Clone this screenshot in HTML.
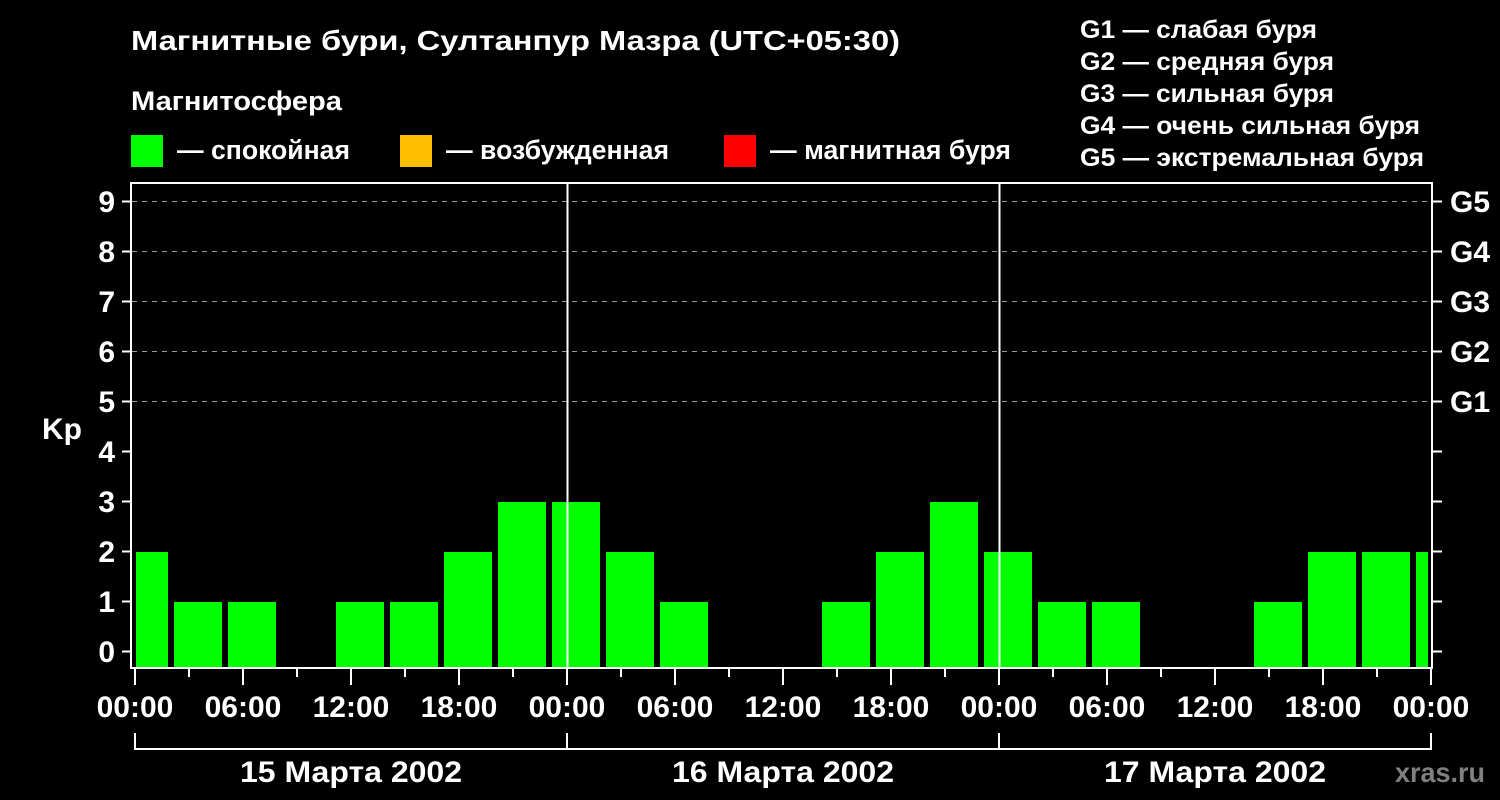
<!DOCTYPE html>
<html><head><meta charset="utf-8"><style>
html,body{margin:0;padding:0;background:#000;width:1500px;height:800px;overflow:hidden}
svg{display:block}
text{font-family:"Liberation Sans",sans-serif;font-weight:bold;fill:#fff}
</style></head><body>
<svg width="1500" height="800" viewBox="0 0 1500 800">
<text x="131" y="50" font-size="28" textLength="769" lengthAdjust="spacingAndGlyphs">Магнитные бури, Султанпур Мазра (UTC+05:30)</text>
<text x="131" y="110" font-size="27" textLength="211" lengthAdjust="spacingAndGlyphs">Магнитосфера</text>
<rect x="131" y="135" width="32" height="32" fill="#00ff00"/>
<text x="177" y="159" font-size="27" textLength="173" lengthAdjust="spacingAndGlyphs">— спокойная</text>
<rect x="400" y="135" width="32" height="32" fill="#ffbf00"/>
<text x="446" y="159" font-size="27" textLength="223" lengthAdjust="spacingAndGlyphs">— возбужденная</text>
<rect x="724" y="135" width="32" height="32" fill="#ff0000"/>
<text x="770" y="159" font-size="27" textLength="241" lengthAdjust="spacingAndGlyphs">— магнитная буря</text>
<g font-size="25">
<text x="1080" y="38" textLength="237" lengthAdjust="spacingAndGlyphs">G1 — слабая буря</text>
<text x="1080" y="70" textLength="254" lengthAdjust="spacingAndGlyphs">G2 — средняя буря</text>
<text x="1080" y="102" textLength="254" lengthAdjust="spacingAndGlyphs">G3 — сильная буря</text>
<text x="1080" y="134" textLength="340" lengthAdjust="spacingAndGlyphs">G4 — очень сильная буря</text>
<text x="1080" y="166" textLength="344" lengthAdjust="spacingAndGlyphs">G5 — экстремальная буря</text>
</g>
<g stroke="#999" stroke-width="1" stroke-dasharray="5 5">
<line x1="132" y1="201.5" x2="1432" y2="201.5"/>
<line x1="132" y1="251.5" x2="1432" y2="251.5"/>
<line x1="132" y1="301.5" x2="1432" y2="301.5"/>
<line x1="132" y1="351.5" x2="1432" y2="351.5"/>
<line x1="132" y1="401.5" x2="1432" y2="401.5"/>
</g>
<g fill="#00ff00">
<rect x="136" y="552" width="32" height="116"/>
<rect x="174" y="602" width="48" height="66"/>
<rect x="228" y="602" width="48" height="66"/>
<rect x="336" y="602" width="48" height="66"/>
<rect x="390" y="602" width="48" height="66"/>
<rect x="444" y="552" width="48" height="116"/>
<rect x="498" y="502" width="48" height="166"/>
<rect x="552" y="502" width="48" height="166"/>
<rect x="606" y="552" width="48" height="116"/>
<rect x="660" y="602" width="48" height="66"/>
<rect x="822" y="602" width="48" height="66"/>
<rect x="876" y="552" width="48" height="116"/>
<rect x="930" y="502" width="48" height="166"/>
<rect x="984" y="552" width="48" height="116"/>
<rect x="1038" y="602" width="48" height="66"/>
<rect x="1092" y="602" width="48" height="66"/>
<rect x="1254" y="602" width="48" height="66"/>
<rect x="1308" y="552" width="48" height="116"/>
<rect x="1362" y="552" width="48" height="116"/>
<rect x="1416" y="552" width="12" height="116"/>
</g>
<g stroke="#fff" fill="none">
<rect x="131" y="183" width="1301" height="485" stroke-width="2"/>
<line x1="567.5" y1="183" x2="567.5" y2="668" stroke-width="2"/>
<line x1="999.5" y1="183" x2="999.5" y2="668" stroke-width="2"/>
<g stroke-width="2">
<path d="M122 201.5H131M122 251.5H131M122 301.5H131M122 351.5H131M122 401.5H131M122 451.5H131M122 501.5H131M122 551.5H131M122 601.5H131M122 651.5H131"/>
<path d="M1432 201.5H1442M1432 251.5H1442M1432 301.5H1442M1432 351.5H1442M1432 401.5H1442M1432 451.5H1442M1432 501.5H1442M1432 551.5H1442M1432 601.5H1442M1432 651.5H1442"/>
<path d="M135 668V685M243 668V685M351 668V685M459 668V685M567 668V685M675 668V685M783 668V685M891 668V685M999 668V685M1107 668V685M1215 668V685M1323 668V685M1431 668V685"/>
<path d="M189 668V677M297 668V677M405 668V677M513 668V677M621 668V677M729 668V677M837 668V677M945 668V677M1053 668V677M1161 668V677M1269 668V677M1377 668V677"/>
<path d="M135 733V749H1431V733M567 733V749M999 733V749"/>
</g>
</g>
<g font-size="30" text-anchor="end">
<text x="115" y="212">9</text><text x="115" y="262">8</text><text x="115" y="312">7</text>
<text x="115" y="362">6</text><text x="115" y="412">5</text><text x="115" y="462">4</text>
<text x="115" y="512">3</text><text x="115" y="562">2</text><text x="115" y="612">1</text>
<text x="115" y="662">0</text>
</g>
<text x="42" y="439" font-size="30">Kp</text>
<g font-size="30">
<text x="1450" y="212">G5</text><text x="1450" y="262">G4</text><text x="1450" y="312">G3</text>
<text x="1450" y="362">G2</text><text x="1450" y="412">G1</text>
</g>
<g font-size="30" text-anchor="middle">
<text x="135" y="717">00:00</text><text x="243" y="717">06:00</text><text x="351" y="717">12:00</text>
<text x="459" y="717">18:00</text><text x="567" y="717">00:00</text><text x="675" y="717">06:00</text>
<text x="783" y="717">12:00</text><text x="891" y="717">18:00</text><text x="999" y="717">00:00</text>
<text x="1107" y="717">06:00</text><text x="1215" y="717">12:00</text><text x="1323" y="717">18:00</text>
<text x="1431" y="717">00:00</text>
<text x="351" y="782" textLength="222" lengthAdjust="spacingAndGlyphs">15 Марта 2002</text>
<text x="783" y="782" textLength="222" lengthAdjust="spacingAndGlyphs">16 Марта 2002</text>
<text x="1215" y="782" textLength="222" lengthAdjust="spacingAndGlyphs">17 Марта 2002</text>
</g>
<text x="1485" y="782" font-size="28" text-anchor="end" textLength="90" lengthAdjust="spacingAndGlyphs" style="fill:#808080">xras.ru</text>
</svg>
</body></html>
